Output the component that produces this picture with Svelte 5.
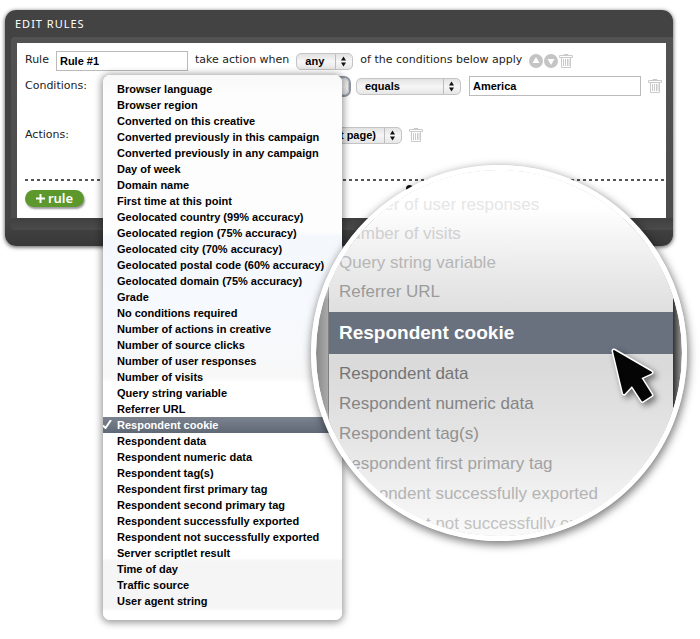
<script>
  const conditions = [
    'Browser language', 'Browser region', 'Converted on this creative',
    'Converted previously in this campaign', 'Converted previously in any campaign',
    'Day of week', 'Domain name', 'First time at this point',
    'Geolocated country (99% accuracy)', 'Geolocated region (75% accuracy)',
    'Geolocated city (70% accuracy)', 'Geolocated postal code (60% accuracy)',
    'Geolocated domain (75% accuracy)', 'Grade', 'No conditions required',
    'Number of actions in creative', 'Number of source clicks',
    'Number of user responses', 'Number of visits', 'Query string variable',
    'Referrer URL', 'Respondent cookie', 'Respondent data',
    'Respondent numeric data', 'Respondent tag(s)', 'Respondent first primary tag',
    'Respondent second primary tag', 'Respondent successfully exported',
    'Respondent not successfully exported', 'Server scriptlet result',
    'Time of day', 'Traffic source', 'User agent string'
  ];
  const above = [
    ['Number of user responses', '#e6e6e6'],
    ['Number of visits', '#d0d0d0'],
    ['Query string variable', '#b6b6b6'],
    ['Referrer URL', '#9b9b9b']
  ];
  const below = [
    ['Respondent data', '#747474'],
    ['Respondent numeric data', '#848484'],
    ['Respondent tag(s)', '#919191'],
    ['Respondent first primary tag', '#a2a2a2'],
    ['Respondent successfully exported', '#b4b4b4'],
    ['Respondent not successfully exported', '#c2c2c2']
  ];
  let selected = $state('Respondent cookie');
  let ruleName = $state('Rule #1');
  let value = $state('America');
</script>

{#snippet stepper()}
  <svg class="stepper" width="18" height="17" viewBox="0 0 18 17" aria-hidden="true">
    <path d="M.5 1v15" stroke="#bdbdbd" />
    <path d="M6 7.5 8.5 3.5 11 7.5ZM6 9.5 8.5 13.5 11 9.5Z" fill="#111" />
  </svg>
{/snippet}

{#snippet trash(label)}
  <button class="icon" aria-label={label}>
    <svg width="14" height="14" viewBox="0 0 14 14" fill="none" stroke="#cacaca" aria-hidden="true">
      <path d="M5 1.5V.5h4v1M.5 1.5h13v2H.5zM2.5 3.5v10h9v-10M4.5 5v7M6.5 5v7M8.5 5v7M10 5v7" />
    </svg>
  </button>
{/snippet}

<main>
  <section class="panel">
    <h1>EDIT RULES</h1>
    <div class="frame">
      <form class="content" onsubmit={(e) => e.preventDefault()}>
        <div class="row">
          <label class="text" for="rule">Rule</label>
          <input id="rule" class="name" bind:value={ruleName} />
          <label class="text" for="match">take action when</label>
          <span class="select any">
            <select id="match"><option>any</option><option>all</option></select>
            {@render stepper()}
          </span>
          <span class="text">of the conditions below apply</span>
          <span class="tools">
            <button class="icon" aria-label="Move rule up">
              <svg width="14" height="14" viewBox="0 0 14 14" aria-hidden="true">
                <circle cx="7" cy="7" r="7" fill="#c4c4c4" /><path d="M7 3l3.5 6h-7z" fill="#fff" />
              </svg>
            </button>
            <button class="icon" aria-label="Move rule down">
              <svg width="14" height="14" viewBox="0 0 14 14" aria-hidden="true">
                <circle cx="7" cy="7" r="7" fill="#c4c4c4" /><path d="M7 11l3.5-6h-7z" fill="#fff" />
              </svg>
            </button>
            {@render trash('Delete rule')}
          </span>
        </div>

        <div class="row">
          <label class="text lead" for="condition">Conditions:</label>
          <span class="select condition">
            <select id="condition" bind:value={selected}>
              {#each conditions as c}<option>{c}</option>{/each}
            </select>
            {@render stepper()}
          </span>
          <span class="select operator">
            <select aria-label="Operator"><option>equals</option><option>contains</option></select>
            {@render stepper()}
          </span>
          <input class="value" aria-label="Value" bind:value />
          {@render trash('Delete condition')}
        </div>

        <div class="row actions">
          <label class="text lead" for="action">Actions:</label>
          <span class="select action">
            <select id="action"><option>Go to page (next page)</option></select>
            {@render stepper()}
          </span>
          {@render trash('Delete action')}
        </div>

        <div class="divider"></div>
        <button class="add" type="button">
          <svg width="9" height="9" viewBox="0 0 9 9" aria-hidden="true"><path d="M4.5 0v9M0 4.5h9" stroke="#fff" stroke-width="2" /></svg>
          rule
        </button>
      </form>
    </div>
  </section>

  <ul class="menu" aria-label="Condition type">
    {#each conditions as c}
      <li>
        <button class:current={c === selected} onclick={() => (selected = c)}>
          {#if c === selected}
            <svg class="check" width="9" height="9" viewBox="0 0 9 9" fill="none" stroke="#fff" stroke-width="2" aria-hidden="true"><path d="M0 5.500 2.500 8 8 0" /></svg>
          {/if}
          {c}
        </button>
      </li>
    {/each}
  </ul>

  <span class="knob"></span>
  <div class="lens">
    <div class="sheet">
      <ul class="above">
        {#each above as [name, color]}<li style:color>{name}</li>{/each}
      </ul>
      <strong>Respondent cookie</strong>
      <ul class="below">
        {#each below as [name, color]}<li style:color>{name}</li>{/each}
      </ul>
    </div>
  </div>
  <svg class="cursor" width="56" height="64" viewBox="0 0 56 64" aria-hidden="true">
    <path d="M6 6 43 27.500 32 32.500 43 50 34.500 55.500 24 39.500 16 48Z" fill="#050505" stroke="#fff" stroke-width="5" stroke-linejoin="round" />
    <path d="M6 6 43 27.500 32 32.500 43 50 34.500 55.500 24 39.500 16 48Z" fill="#050505" stroke="#050505" stroke-width="2" stroke-linejoin="round" />
  </svg>
</main>

<style>
  :global(body) { margin: 0; background: #fff; }
  main {
    position: relative;
    box-sizing: border-box;
    min-height: 639px;
    padding: 10px 27px 0 5px;
    overflow: hidden;
    font: bold 11px/16px "Liberation Sans", Arial, sans-serif;
    color: #000;
  }
  ul { list-style: none; margin: 0; padding: 0; }
  button, input, select { font: inherit; color: inherit; margin: 0; box-sizing: border-box; }

  .panel {
    padding: 0 0 16px 6px;
    border-radius: 11px;
    background: linear-gradient(#434343 90%, #383838);
    box-shadow: 0 1px 4px rgba(0, 0, 0, 0.7);
  }
  h1 {
    margin: 0;
    padding: 0 4px;
    font: 11px/27px "Noto Sans", "Open Sans", sans-serif;
    letter-spacing: 1px;
    color: #fff;
  }
  .frame {
    padding: 6px 7px 12px 6px;
    border-radius: 4px 0 0 4px;
    background: linear-gradient(#525252 0, #4c4c4c 94%, #404040 94%, #4b4b4b 100%);
  }
  .content {
    padding: 8px 0 11px 8px;
    background: #fff;
  }
  .row {
    display: flex;
    align-items: center;
    gap: 7px;
    height: 20px;
    margin-bottom: 5px;
    white-space: nowrap;
  }
  .actions { margin-top: 29px; margin-bottom: 34px; }
  .text {
    padding-bottom: 3px;
    font: 11px/16px "DejaVu Sans", Verdana, sans-serif;
    color: #222;
  }
  .lead { flex: 0 0 78px; padding-bottom: 0; }
  input {
    height: 20px;
    padding: 0 3px;
    border: 1px solid #bbb;
    background: #fff;
  }
  .name { width: 132px; }
  .value { flex: 0 1 172px; min-width: 0; margin: 0 0 0 1px; }
  .select { display: grid; }
  .select > * { grid-area: 1 / 1; }
  select {
    appearance: none;
    width: 100%;
    height: 17px;
    padding: 0 22px 0 8px;
    border: 1px solid #c4c4c4;
    border-radius: 5px;
    background: linear-gradient(#e2e2e2, #f6f6f6 50%, #e6e6e6);
    line-height: 15px;
  }
  .stepper { justify-self: end; pointer-events: none; }
  .any { width: 57px; }
  .condition { width: 239px; }
  .condition select { box-shadow: 0 0 0 2px #8f97a6; }
  .operator { width: 105px; }
  .action { width: 292px; }
  .action select { text-align-last: right; padding-right: 25px; }
  .icon {
    display: grid;
    place-items: center;
    width: 14px;
    height: 14px;
    padding: 0;
    border: 0;
    background: none;
  }
  .tools { display: flex; gap: 1px; }
  .divider {
    height: 2px;
    margin-bottom: 9px;
    background: repeating-linear-gradient(90deg, #555 0 3px, transparent 3px 6px);
  }
  .add {
    display: flex;
    align-items: center;
    justify-content: center;
    gap: 3px;
    width: 59px;
    height: 17px;
    padding: 0 0 2px;
    border: 0;
    border-radius: 9px;
    background: #5d982c;
    box-shadow: 1px 2px 2px rgba(0, 0, 0, 0.4);
    color: #fff;
    font: 600 13px/16px "Noto Sans", "Open Sans", sans-serif;
  }
  .add svg { margin-top: 2px; }

  .menu {
    position: absolute;
    left: 103px;
    top: 75px;
    width: 239px;
    padding: 6px 0 11px;
    border-radius: 7px;
    background: linear-gradient(#f8f8f8 0, #fdfdfd 20px, #fdfdfd 157px, #f4f7fc 161px, #f6f9fd 240px, #f8f8f8 302px, #fff 308px, #fff 483px, #f5f5f5 486px, #f5f5f5 533px, #fff 536px);
    box-shadow: 0 1px 7px 2px rgba(0, 0, 0, 0.38);
  }
  .menu button {
    position: relative;
    display: block;
    width: 100%;
    height: 16px;
    padding: 0 0 0 14px;
    border: 0;
    background: none;
    text-align: left;
    white-space: nowrap;
  }
  .menu .current { background: linear-gradient(#7b838f, #5f6875); color: #fff; }
  .check { position: absolute; left: 0; top: 3px; }

  .knob {
    position: absolute;
    left: 406px;
    top: 185px;
    width: 7px;
    height: 7px;
    border-radius: 50%;
    background: #111;
  }
  .lens {
    position: absolute;
    left: 311px;
    top: 165px;
    box-sizing: border-box;
    width: 376px;
    height: 376px;
    padding: 0 9px 0 13px;
    border: 5px solid #fff;
    border-radius: 50%;
    overflow: hidden;
    background:
      linear-gradient(#fff 100px, transparent 130px, transparent 240px, #fff 270px),
      linear-gradient(90deg, #888 0, #aaa 12px, #555 13px, #333 357px, #999 366px);
    background-clip: padding-box;
    box-shadow: 1px 3px 9px 1px rgba(0, 0, 0, 0.5);
  }
  .sheet {
    height: 366px;
    padding-top: 20px;
    box-sizing: border-box;
    background: linear-gradient(#fff 0, #fff 35px, #ececec 95px, #dedede 145px, #dadada 195px, #e4e4e4 265px, #fafafa 366px);
    font: 17px/29px "Liberation Sans", Arial, sans-serif;
    white-space: nowrap;
  }
  .sheet li { padding-left: 10px; }
  .sheet strong {
    display: block;
    margin: 6px 0 5px;
    padding-left: 10px;
    background: #68717d;
    color: #fff;
    font-size: 19px;
    line-height: 42px;
  }
  .below { line-height: 30px; }
  .cursor {
    position: absolute;
    left: 608px;
    top: 345px;
    filter: drop-shadow(3px 3px 3px rgba(0, 0, 0, 0.5));
  }
</style>
